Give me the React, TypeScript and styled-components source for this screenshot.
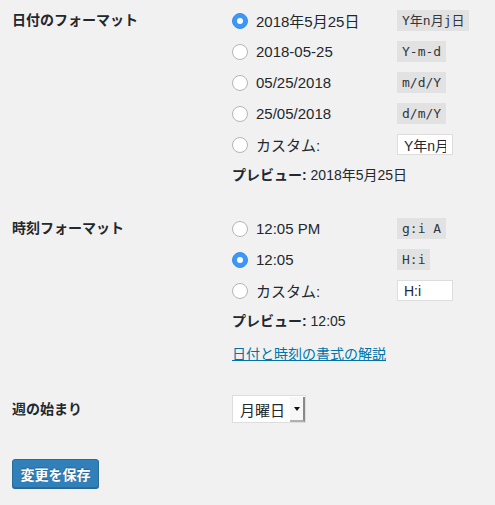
import React from 'react';
import styled, { createGlobalStyle } from 'styled-components';

const GlobalStyle = createGlobalStyle`
    html, body {
        margin: 0;
        padding: 0;
        background: #f1f1f1;
    }
    body {
        font-family: "Liberation Sans", "Noto Sans CJK JP", sans-serif;
        color: #23282d;
    }
`;

const Page = styled.div`
    width: 495px;
    height: 505px;
    box-sizing: border-box;
    padding: 5px 12px 0 12px;
    background: #f1f1f1;
    overflow: hidden;
`;

const Section = styled.div<{ $gap?: number }>`
    display: flex;
    align-items: flex-start;
    margin-bottom: ${p => p.$gap ?? 0}px;
`;

const Th = styled.div<{ $lh?: number }>`
    width: 220px;
    flex: none;
    font-size: 14px;
    font-weight: bold;
    line-height: ${p => p.$lh ?? 31}px;
`;

const Td = styled.div`
    display: flex;
    flex-direction: column;
`;

const OptionRow = styled.label`
    display: flex;
    align-items: center;
    height: 31px;
    font-size: 15px;
`;

const Radio = styled.span<{ $checked?: boolean }>`
    width: 16px;
    height: 16px;
    box-sizing: border-box;
    border-radius: 50%;
    flex: none;
    margin-right: 8px;
    position: relative;
    background: ${p => (p.$checked ? '#3d97f6' : '#fff')};
    border: 1px solid ${p => (p.$checked ? '#3a8ee6' : '#b5b5b5')};
    &::after {
        content: '';
        display: ${p => (p.$checked ? 'block' : 'none')};
        position: absolute;
        left: 4px;
        top: 4px;
        width: 6px;
        height: 6px;
        border-radius: 50%;
        background: #fff;
    }
`;

const OptionText = styled.span`
    width: 141px;
    flex: none;
`;

const Code = styled.code`
    font-family: "DejaVu Sans Mono", "Noto Sans CJK JP", monospace;
    font-size: 13px;
    background: #e2e2e2;
    color: #32373c;
    padding: 2px 5px 1px;
    line-height: 18px;
`;

const Custom = styled.input`
    width: 56px;
    height: 21px;
    box-sizing: border-box;
    background: #fff;
    border: 1px solid #ddd;
    font-family: "Liberation Sans", "Noto Sans CJK JP", sans-serif;
    font-size: 14px;
    color: #23282d;
    padding: 0 6px;
    margin: 0;
    outline: none;
`;

const Preview = styled.div`
    font-size: 14px;
    line-height: 30px;
    b {
        font-weight: bold;
    }
`;

const HelpLink = styled.a`
    display: inline-block;
    margin-top: 4px;
    font-size: 14px;
    line-height: 28px;
    color: #0073aa;
    text-decoration: underline;
`;

const Select = styled.div`
    display: flex;
    align-items: stretch;
    height: 28px;
    box-sizing: border-box;
    border: 1px solid #ddd;
    background: #fff;
    font-size: 15px;
`;

const SelectText = styled.span`
    display: flex;
    align-items: center;
    padding: 0 5px 0 7px;
`;

const SelectArrow = styled.span`
    width: 13px;
    display: flex;
    align-items: center;
    justify-content: center;
    background: #f7f7f7;
    border-right: 2px solid #8a8a8a;
    border-bottom: 2px solid #b0b0b0;
    margin: 1px 0 0;
    &::after {
        content: '';
        border-left: 3px solid transparent;
        border-right: 3px solid transparent;
        border-top: 4px solid #111;
    }
`;

const SaveButton = styled.button`
    width: 87px;
    height: 29px;
    box-sizing: border-box;
    background: #3280b9;
    border: 1px solid #2a6c9e;
    border-radius: 3px;
    box-shadow: 0 1px 0 #276594;
    color: #fff;
    font-family: "Liberation Sans", "Noto Sans CJK JP", sans-serif;
    font-size: 14px;
    font-weight: bold;
    text-shadow: 0 -1px 1px #26628f;
    padding: 0;
`;

const dateFormats = [
    { label: '2018年5月25日', code: 'Y年n月j日', checked: true },
    { label: '2018-05-25', code: 'Y-m-d' },
    { label: '05/25/2018', code: 'm/d/Y' },
    { label: '25/05/2018', code: 'd/m/Y' },
];

const timeFormats = [
    { label: '12:05 PM', code: 'g:i A' },
    { label: '12:05', code: 'H:i', checked: true },
];

const App = () => {
    return (
        <Page>
            <GlobalStyle />
            <Section $gap={23}>
                <Th>日付のフォーマット</Th>
                <Td>
                    {dateFormats.map(f => (
                        <OptionRow key={f.code}>
                            <Radio $checked={f.checked} />
                            <OptionText>{f.label}</OptionText>
                            <Code>{f.code}</Code>
                        </OptionRow>
                    ))}
                    <OptionRow>
                        <Radio />
                        <OptionText>カスタム:</OptionText>
                        <Custom readOnly value="Y年n月j日" />
                    </OptionRow>
                    <Preview><b>プレビュー:</b> 2018年5月25日</Preview>
                </Td>
            </Section>

            <Section $gap={27}>
                <Th>時刻フォーマット</Th>
                <Td>
                    {timeFormats.map(f => (
                        <OptionRow key={f.code}>
                            <Radio $checked={f.checked} />
                            <OptionText>{f.label}</OptionText>
                            <Code>{f.code}</Code>
                        </OptionRow>
                    ))}
                    <OptionRow>
                        <Radio />
                        <OptionText>カスタム:</OptionText>
                        <Custom readOnly value="H:i" />
                    </OptionRow>
                    <Preview><b>プレビュー:</b> 12:05</Preview>
                    <div>
                        <HelpLink href="#">日付と時刻の書式の解説</HelpLink>
                    </div>
                </Td>
            </Section>

            <Section $gap={36}>
                <Th $lh={28}>週の始まり</Th>
                <Td>
                    <Select>
                        <SelectText>月曜日</SelectText>
                        <SelectArrow />
                    </Select>
                </Td>
            </Section>

            <SaveButton>変更を保存</SaveButton>
        </Page>
    );
};

export default App;
